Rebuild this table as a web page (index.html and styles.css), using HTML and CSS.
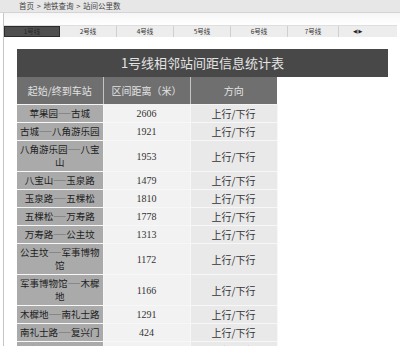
FILE: index.html
```html
<!DOCTYPE html>
<html lang="zh">
<head>
<meta charset="utf-8">
<title>站间公里数</title>
<link rel="stylesheet" href="styles.css">
</head>
<body>
<div class="crumb">首页 &gt; 地铁查询 &gt; 站间公里数</div>
<div class="page">
  <div class="tabs">
    <span class="tab on">1号线</span>
    <span class="tab">2号线</span>
    <span class="tab">4号线</span>
    <span class="tab">5号线</span>
    <span class="tab">6号线</span>
    <span class="tab last">7号线</span>
    <span class="arrows">◀|▶</span>
  </div>
  <div class="title">1号线相邻站间距信息统计表</div>
  <table class="stats">
    <colgroup><col class="c1"><col class="c2"><col class="c3"></colgroup>
    <thead>
      <tr><th>起始/终到车站</th><th>区间距离（米）</th><th>方向</th></tr>
    </thead>
    <tbody>
      <tr><td class="st">苹果园<span class="d">——</span>古城</td><td class="num">2606</td><td class="dir">上行/下行</td></tr>
      <tr><td class="st">古城<span class="d">——</span>八角游乐园</td><td class="num">1921</td><td class="dir">上行/下行</td></tr>
      <tr><td class="st">八角游乐园<span class="d">——</span>八宝山</td><td class="num">1953</td><td class="dir">上行/下行</td></tr>
      <tr><td class="st">八宝山<span class="d">——</span>玉泉路</td><td class="num">1479</td><td class="dir">上行/下行</td></tr>
      <tr><td class="st">玉泉路<span class="d">——</span>五棵松</td><td class="num">1810</td><td class="dir">上行/下行</td></tr>
      <tr><td class="st">五棵松<span class="d">——</span>万寿路</td><td class="num">1778</td><td class="dir">上行/下行</td></tr>
      <tr><td class="st">万寿路<span class="d">——</span>公主坟</td><td class="num">1313</td><td class="dir">上行/下行</td></tr>
      <tr><td class="st">公主坟<span class="d">——</span>军事博物馆</td><td class="num">1172</td><td class="dir">上行/下行</td></tr>
      <tr><td class="st">军事博物馆<span class="d">——</span>木樨地</td><td class="num">1166</td><td class="dir">上行/下行</td></tr>
      <tr><td class="st">木樨地<span class="d">——</span>南礼士路</td><td class="num">1291</td><td class="dir">上行/下行</td></tr>
      <tr><td class="st">南礼士路<span class="d">——</span>复兴门</td><td class="num">424</td><td class="dir">上行/下行</td></tr>
      <tr><td class="st">复兴门<span class="d">——</span>西单</td><td class="num">1590</td><td class="dir">上行/下行</td></tr>
    </tbody>
  </table>
</div>
</body>
</html>
```
FILE: styles.css
```css
body {
  margin: 0;
  background: #ffffff;
  font-family: "Noto Sans CJK SC", sans-serif;
  color: #222;
}
.crumb {
  box-sizing: border-box;
  height: 13px;
  line-height: 12px;
  padding-left: 19px;
  background: #e7e7e7;
  border-bottom: 1px solid #d4d4d4;
  font-size: 7.5px;
  word-spacing: 1px;
  color: #444;
}
.page {
  margin-left: 3px;
  border-left: 1px solid #c6c6c6;
  padding-top: 12px;
  min-height: 340px;
  background: linear-gradient(#f6f6f6, #ffffff 12px);
}
.tabs {
  display: flex;
  height: 12px;
  background: #ededed;
  border-top: 1px solid #dedede;
  box-sizing: border-box;
  margin-right: 3px;
}
.tab {
  box-sizing: border-box;
  width: 57px;
  border-right: 1px solid #cfcfcf;
  text-align: center;
  font-size: 6.5px;
  line-height: 11px;
  color: #333;
}
.tab.on {
  width: 56px;
  background: #4f4f4f;
  border: 1px solid #2c2c2c;
  line-height: 9px;
  color: #262626;
}
.tab.last {
  width: 51px;
}
.arrows {
  margin-left: 14px;
  font-family: "DejaVu Sans", sans-serif;
  font-size: 5px;
  line-height: 11px;
  color: #222;
}
.title {
  margin: 12px 0 0 13px;
  width: 371px;
  height: 28px;
  line-height: 28px;
  background: #484848;
  color: #e4e4e4;
  text-align: center;
  font-size: 13px;
}
.stats {
  margin-left: 13px;
  width: 260px;
  table-layout: fixed;
  border-collapse: collapse;
}
.c1 { width: 86px; }
.c2 { width: 87px; }
.c3 { width: 87px; }
.stats th {
  height: 27px;
  padding: 0;
  background: #6f6f6f;
  color: #e2e2e2;
  font-weight: normal;
  font-size: 10px;
  border-left: 1px solid #c4c4c4;
  border-bottom: 1px solid #f4f4f4;
}
.stats th:first-child {
  border-left: none;
}
.stats td {
  padding: 2px 2px;
  line-height: 13px;
  text-align: center;
  border: 1px solid #f7f7f7;
  border-top: none;
}
.stats td:first-child {
  border-left: none;
}
.st {
  background: #aaaaaa;
  font-size: 9.5px;
  color: #1e1e1e;
}
.d {
  font-size: 6.5px;
  vertical-align: 1px;
}
.num {
  background: #f2f2f2;
  font-family: "Liberation Serif", serif;
  font-size: 10px;
  color: #333;
}
.dir {
  background: #e9e9e9;
  font-size: 10px;
  color: #333;
}
```
